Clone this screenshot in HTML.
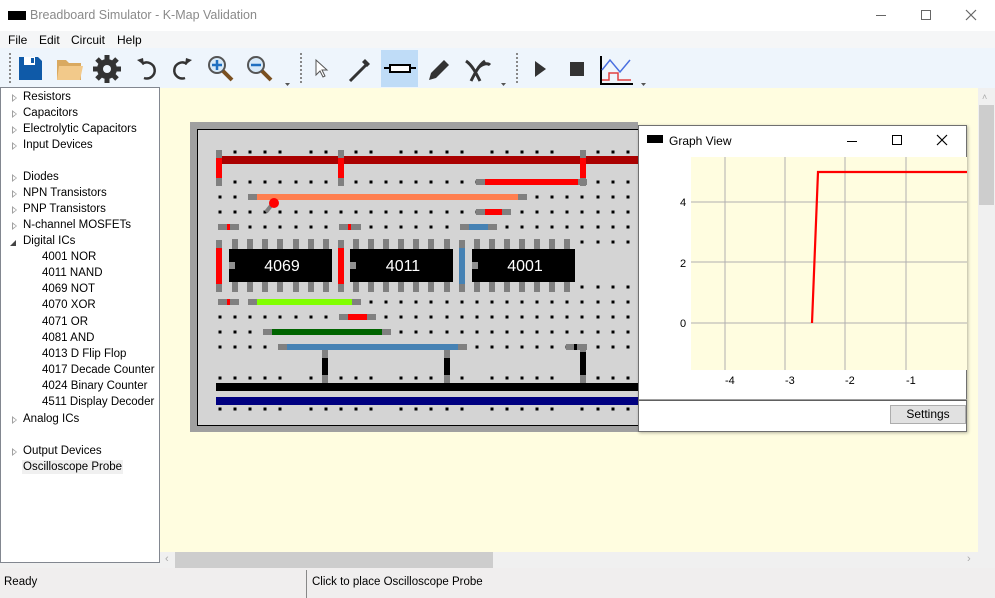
<!DOCTYPE html>
<html><head><meta charset="utf-8">
<style>
*{margin:0;padding:0;box-sizing:border-box}
body{width:995px;height:598px;overflow:hidden;background:#f0f0f0;font-family:"Liberation Sans",sans-serif;font-size:12px;color:#000;position:relative}
.abs{position:absolute}
#title{left:0;top:0;width:995px;height:31px;background:#fff}
#menu{left:0;top:31px;width:995px;height:17px;background:#f5f6f7}
#menu span{position:absolute;top:2px;font-size:12px}
#tb{left:0;top:48px;width:995px;height:40px;background:#eef5fc}
#tree{left:0;top:87px;width:160px;height:476px;background:#fff;border:1px solid #828790}
#tree div{position:absolute;font-size:11.5px;white-space:nowrap}
.arr{position:absolute;left:11px;width:0;height:0;border-left:5px solid #a0a0a0;border-top:4px solid transparent;border-bottom:4px solid transparent}
.arr::after{content:"";position:absolute;left:-4px;top:-2px;border-left:3px solid #fff;border-top:2px solid transparent;border-bottom:2px solid transparent}
#canvas{left:160px;top:88px;width:818px;height:464px;background:#fffde0}
#status{left:0;top:568px;width:995px;height:30px;background:#f0eeee}
</style></head><body>
<div id="title" class="abs">
 <div class="abs" style="left:8px;top:11px;width:18px;height:9px;background:#000"></div>
 <div class="abs" style="left:30px;top:8px;font-size:12.5px;color:#8a8a8a">Breadboard Simulator - K-Map Validation</div>
 <div class="abs" style="left:876px;top:15px;width:10px;height:1px;background:#666"></div>
 <div class="abs" style="left:921px;top:10px;width:10px;height:10px;border:1px solid #666"></div>
 <svg class="abs" style="left:965px;top:9px" width="12" height="12"><path d="M1 1L11 11M11 1L1 11" stroke="#666" stroke-width="1.2"/></svg>
</div>
<div id="menu" class="abs"><span style="left:8px">File</span><span style="left:39px">Edit</span><span style="left:71px">Circuit</span><span style="left:117px">Help</span></div>
<div id="tb" class="abs">
 <div class="abs" style="left:9px;top:5px;height:30px;border-left:2px dotted #888"></div>
 <div class="abs" style="left:300px;top:5px;height:30px;border-left:2px dotted #888"></div>
 <div class="abs" style="left:516px;top:5px;height:30px;border-left:2px dotted #888"></div>
 <div class="abs" style="left:381px;top:2px;width:37px;height:37px;background:#bfdcf7"></div>
 <svg class="abs" style="left:0;top:0" width="660" height="40">
  <path d="M19 9h19l4 4v19H19z" fill="#0f5aa8"/><rect x="24" y="9" width="11" height="8" fill="#fff"/><rect x="31" y="10" width="3" height="5" fill="#0f5aa8"/>
  <path d="M57 12h9l3 3h12v17H57z" fill="#d9a960"/><path d="M59 18h24l-3 14H57z" fill="#f2c98a"/>
  <circle cx="107" cy="21" r="10" fill="#333"/>
  <g stroke="#333" stroke-width="5"><path d="M107 7v28M93 21h28M97 11l20 20M117 11l-20 20"/></g><circle cx="107" cy="21" r="4" fill="#eef5fc"/>
  <path d="M142 16a8 8 0 1 1 2 14" stroke="#333" stroke-width="2.5" fill="none"/><path d="M137 12l6-2 1 7z" fill="#333"/>
  <path d="M187 16a8 8 0 1 0 -2 14" stroke="#333" stroke-width="2.5" fill="none"/><path d="M192 12l-6-2-1 7z" fill="#333"/>
  <circle cx="217" cy="17" r="8" fill="#d6e9f8" stroke="#555" stroke-width="2"/><path d="M212 17h10M217 12v10" stroke="#1e6fc0" stroke-width="2.5"/><path d="M223 23l9 9" stroke="#7a5020" stroke-width="4"/>
  <circle cx="256" cy="17" r="8" fill="#d6e9f8" stroke="#555" stroke-width="2"/><path d="M251 17h10" stroke="#1e6fc0" stroke-width="2.5"/><path d="M262 23l9 9" stroke="#7a5020" stroke-width="4"/>
  <path d="M285 35h5l-2.5 3z" fill="#555"/>
  <path d="M316 12v15l4-4 3 6 2-1-3-6h5z" fill="#fff" stroke="#555"/>
  <path d="M350 33l8-8M356 27l10-10" stroke="#333" stroke-width="3"/><path d="M362 14l5 5 3-3-5-5z" fill="#333"/>
  <path d="M384 20h32" stroke="#000" stroke-width="2"/><rect x="390" y="17" width="20" height="7" fill="#fff" stroke="#000" stroke-width="2"/>
  <path d="M429 32l2-7 13-13 5 5-13 13z" fill="#333"/>
  <path d="M466 13c6 4 10 12 14 20M485 13c-6 4-10 12-14 20M478 20c5-5 10-5 12-3" stroke="#333" stroke-width="3" fill="none"/>
  <path d="M501 35h5l-2.5 3z" fill="#555"/>
  <path d="M535 13l11 8-11 8z" fill="#333"/><rect x="570" y="14" width="14" height="14" fill="#333"/>
  <path d="M601 8v28h32" stroke="#000" stroke-width="2" fill="none"/><path d="M602 22l8-10 10 12 10-12" stroke="#4a6fe0" stroke-width="1.5" fill="none"/><path d="M602 32h7v-7h9v7h13" stroke="#e04040" stroke-width="1.5" fill="none"/>
  <path d="M641 35h5l-2.5 3z" fill="#555"/>
 </svg>
</div>
<div id="tree" class="abs">
 <span class="arr" style="top:6px"></span><div style="left:22px;top:3px">Resistors</div>
 <span class="arr" style="top:22px"></span><div style="left:22px;top:19px">Capacitors</div>
 <span class="arr" style="top:38px"></span><div style="left:22px;top:35px">Electrolytic Capacitors</div>
 <span class="arr" style="top:54px"></span><div style="left:22px;top:51px">Input Devices</div>
 <span class="arr" style="top:86px"></span><div style="left:22px;top:83px">Diodes</div>
 <span class="arr" style="top:102px"></span><div style="left:22px;top:99px">NPN Transistors</div>
 <span class="arr" style="top:118px"></span><div style="left:22px;top:115px">PNP Transistors</div>
 <span class="arr" style="top:134px"></span><div style="left:22px;top:131px">N-channel MOSFETs</div>
 <div style="left:9px;width:0;height:0;border-left:6px solid transparent;border-bottom:6px solid #444;top:152px"></div><div style="left:22px;top:147px">Digital ICs</div>
 <div style="left:41px;top:163px">4001 NOR</div>
 <div style="left:41px;top:179px">4011 NAND</div>
 <div style="left:41px;top:195px">4069 NOT</div>
 <div style="left:41px;top:211px">4070 XOR</div>
 <div style="left:41px;top:228px">4071 OR</div>
 <div style="left:41px;top:244px">4081 AND</div>
 <div style="left:41px;top:260px">4013 D Flip Flop</div>
 <div style="left:41px;top:276px">4017 Decade Counter</div>
 <div style="left:41px;top:292px">4024 Binary Counter</div>
 <div style="left:41px;top:308px">4511 Display Decoder</div>
 <span class="arr" style="top:328px"></span><div style="left:22px;top:325px">Analog ICs</div>
 <span class="arr" style="top:360px"></span><div style="left:22px;top:357px">Output Devices</div>
 <div style="left:21px;top:372px;background:#f0f0f0;padding:1px 1px">Oscilloscope Probe</div>
</div>
<div id="canvas" class="abs"></div>
<div class="abs" style="left:978px;top:88px;width:17px;height:464px;background:#f0f0f0"></div>
<div class="abs" style="left:979px;top:105px;width:15px;height:100px;background:#cdcdcd"></div>
<div class="abs" style="left:160px;top:552px;width:835px;height:16px;background:#f0f0f0"></div>
<div class="abs" style="left:175px;top:552px;width:318px;height:16px;background:#cdcdcd"></div>
<div class="abs" style="left:165px;top:553px;color:#aaa;font-size:11px">‹</div>
<div class="abs" style="left:967px;top:553px;color:#aaa;font-size:11px">›</div>
<div class="abs" style="left:982px;top:92px;color:#aaa;font-size:9px">˄</div>
<svg id="board" class="abs" style="left:0;top:0" width="995" height="598"></svg>
<div class="abs" style="left:638px;top:125px;width:329px;height:307px;background:#fff;border:1px solid #707070;box-shadow:1px 1px 3px rgba(0,0,0,.3)">
 <div class="abs" style="left:8px;top:9px;width:16px;height:8px;background:#000"></div>
 <div class="abs" style="left:30px;top:8px;font-size:12px">Graph View</div>
 <div class="abs" style="left:208px;top:15px;width:10px;height:1px;background:#000"></div>
 <div class="abs" style="left:253px;top:9px;width:10px;height:10px;border:1px solid #000"></div>
 <svg class="abs" style="left:297px;top:8px" width="12" height="12"><path d="M1 1L11 11M11 1L1 11" stroke="#000" stroke-width="1.2"/></svg>
 <svg class="abs" style="left:0;top:0" width="328" height="280">
  <rect x="52" y="31" width="276" height="213" fill="#fffde0"/>
  <g stroke="#b0b0b0" stroke-width="1"><path d="M86 31v213M146 31v213M206 31v213M267 31v213M52 76h276M52 136h276M52 197h276"/></g>
  <path d="M173 197L179 46H328" stroke="#f00" stroke-width="2.2" fill="none"/>
  <g font-family="Liberation Sans" font-size="11" fill="#000"><text x="41" y="80">4</text><text x="41" y="141">2</text><text x="41" y="201">0</text>
  <text x="86" y="258">-4</text><text x="146" y="258">-3</text><text x="206" y="258">-2</text><text x="267" y="258">-1</text></g>
 </svg>
 <div class="abs" style="left:0;top:273px;width:328px;height:2px;border-top:1px solid #a0a0a0;border-bottom:1px solid #606060"></div>
 <div class="abs" style="left:251px;top:279px;width:76px;height:19px;background:#e1e1e1;border:1px solid #adadad;text-align:center;font-size:12px;line-height:17px">Settings</div>
</div>
<div id="status" class="abs">
 <div class="abs" style="left:4px;top:8px;font-size:11.5px">Ready</div>
 <div class="abs" style="left:306px;top:2px;width:1px;height:28px;background:#888"></div>
 <div class="abs" style="left:312px;top:8px;font-size:11.5px">Click to place Oscilloscope Probe</div>
</div>
<script>
var s='';
function R(x,y,w,h,c){s+='<rect x="'+x+'" y="'+y+'" width="'+w+'" height="'+h+'" fill="'+c+'"/>';}
R(190,122,448,310,'#a0a0a0');R(197,129,441,296,'#d4d4d4');
s+='<rect x="197.5" y="129.5" width="441" height="296" fill="none" stroke="#000"/>';
function cx(i){return 220+15.1*i;}
var rows=[[152,1],[182,0],[197,0],[212,0],[227,0],[302,0],[317,0],[332,0],[347,0],[378,1],[409,1]];
rows.forEach(function(r){for(var i=0;i<28;i++){if(r[1]&&(i%6==5))continue;R(Math.round(cx(i))-1.5,r[0]-1.5,3,3,'#000');}});
for(var i=24;i<28;i++){R(Math.round(cx(i))-1.5,240.5,3,3,'#000');R(Math.round(cx(i))-1.5,285.5,3,3,'#000');}
function H(x1,x2,y,c){R(x1,y-3,x2-x1,6,'#808080');R(x1+9,y-3,x2-x1-18,6,c);}
function V(x,y1,y2,c){R(x-3,y1,6,y2-y1,'#808080');R(x-3,y1+8,6,y2-y1-16,c);}
R(217,156,421,8,'#aa0000');
V(219,150,186,'#f00');V(341,150,186,'#f00');V(583,150,186,'#f00');
H(476,587,182,'#f00');H(248,527,197,'#ff7f50');
s+='<path d="M266 212l8-10" stroke="#808080" stroke-width="4"/><circle cx="274" cy="203" r="5" fill="#f00"/>';
H(476,511,212,'#f00');H(460,497,227,'#4682b4');
R(218,224,21,6,'#808080');R(227,224,3,6,'#f00');R(339,224,22,6,'#808080');R(348,224,3,6,'#f00');
R(218,299,21,6,'#808080');R(227,299,3,6,'#f00');
V(219,240,292,'#f00');V(341,240,292,'#f00');V(462,240,292,'#4682b4');
function chip(x,c0,lab){for(var k=0;k<7;k++){var px=Math.round(cx(c0+k))-3;R(px,239,6,10,'#808080');R(px,282,6,10,'#808080');}
R(x,249,103,33,'#000');R(x,262,6,7,'#909090');
s+='<text x="'+(x+53)+'" y="271" fill="#fff" font-family="Liberation Sans" font-size="16" text-anchor="middle">'+lab+'</text>';}
chip(229,1,'4069');chip(350,9,'4011');chip(472,17,'4001');
H(248,361,302,'#80ff00');H(339,376,317,'#f00');H(263,391,332,'#006400');H(278,467,347,'#4682b4');
V(325,350,383,'#000');V(447,350,383,'#000');
R(566,344,21,6,'#808080');R(574,344,3,6,'#000');V(583,344,383,'#000');
R(216,383,422,8,'#000');R(216,397,422,8,'#000080');
document.getElementById('board').innerHTML=s;
</script>
</body></html>
